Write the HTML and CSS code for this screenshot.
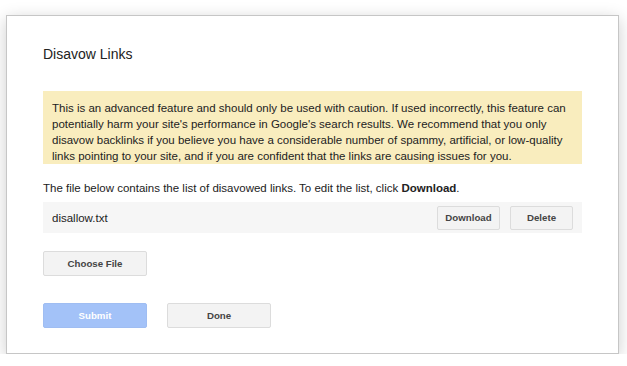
FILE: index.html
```html
<!DOCTYPE html>
<html lang="en">
<head>
	<meta charset="utf-8">
	<title>Disavow Links</title>
	<link rel="stylesheet" href="styles.css">
</head>
<body>
	<div class="dialog">
		<h1 class="title">Disavow Links</h1>
		<div class="warning">
			This is an advanced feature and should only be used with caution. If used incorrectly, this feature can potentially harm your site's performance in Google's search results. We recommend that you only disavow backlinks if you believe you have a considerable number of spammy, artificial, or low-quality links pointing to your site, and if you are confident that the links are causing issues for you.
		</div>
		<p class="intro">The file below contains the list of disavowed links. To edit the list, click <b>Download</b>.</p>
		<div class="file-row">
			<span class="file-name">disallow.txt</span>
			<div class="file-actions">
				<button class="btn small">Download</button>
				<button class="btn small">Delete</button>
			</div>
		</div>
		<button class="btn wide choose">Choose File</button>
		<div class="footer">
			<button class="btn wide submit">Submit</button>
			<button class="btn wide">Done</button>
		</div>
	</div>
</body>
</html>
```

FILE: styles.css
```css
*{
	margin: 0;
	box-sizing: border-box;
}

body{
	background: #fff;
	font-family: Arial, "Liberation Sans", sans-serif;
	color: #222;
}

.dialog{
	margin: 15px 0 0 6px;
	width: 613px;
	height: 339px;
	border: 1px solid #c6c6c6;
	background: #fff;
	box-shadow: 0 4px 16px rgba(0, 0, 0, 0.2);
	padding: 29px 36px 0 36px;
}

.title{
	font-size: 14px;
	font-weight: normal;
	line-height: 18px;
	color: #222;
	margin-bottom: 28px;
}

.warning{
	background: #f9edbe;
	font-size: 11.5px;
	line-height: 16px;
	color: #222;
	padding: 9px 9px 1px 9px;
	height: 73px;
}

.intro{
	font-size: 11.5px;
	line-height: 16px;
	margin-top: 16px;
	color: #222;
}

.intro b{
	font-weight: bold;
}

.file-row{
	display: flex;
	justify-content: space-between;
	align-items: center;
	background: #f6f6f6;
	margin-top: 6px;
	height: 31px;
	padding: 0 9px;
	font-size: 11.5px;
	color: #222;
}

.file-actions{
	display: flex;
	gap: 10px;
}

.btn{
	font-family: Arial, "Liberation Sans", sans-serif;
	font-size: 9.7px;
	font-weight: bold;
	color: #444;
	background: #f3f3f3;
	border: 1px solid #dcdcdc;
	border-radius: 2px;
	height: 25px;
	padding: 0;
}

.btn.small{
	width: 63px;
	height: 24px;
}

.btn.wide{
	width: 104px;
}

.choose{
	display: block;
	margin-top: 18px;
}

.footer{
	display: flex;
	gap: 20px;
	margin-top: 27px;
}

.btn.submit{
	background: #a3c2f8;
	border-color: #9fbdf2;
	color: #fff;
}
```
